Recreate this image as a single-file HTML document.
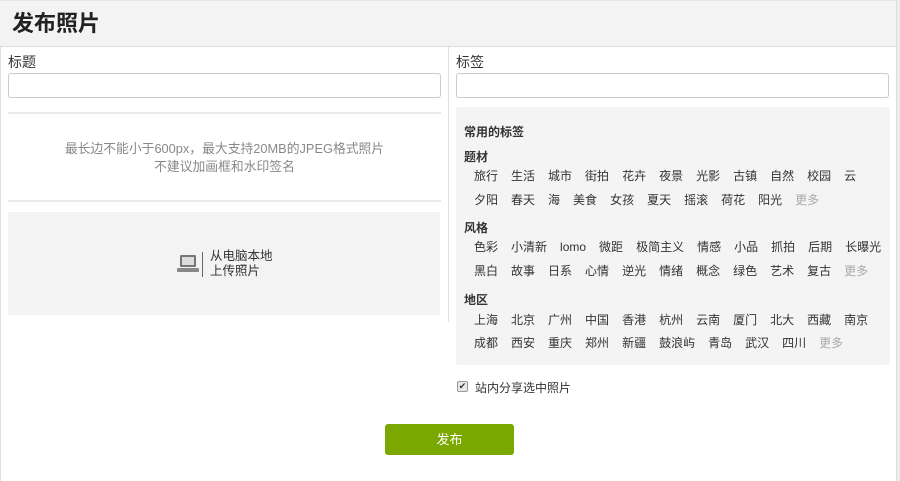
<!DOCTYPE html>
<html><head><meta charset="utf-8"><style>
*{margin:0;padding:0;box-sizing:border-box}
body{width:900px;height:481px;background:#fff;font-family:"Liberation Sans","Noto Sans CJK SC",sans-serif;color:#333;position:relative;overflow:hidden;font-size:12px}
.abs{position:absolute}
#hdr{left:0;top:0;width:897px;height:47px;background:#f3f3f3;border-bottom:1px solid #ddd;border-top:1px solid #e6e6e6}
#hdr h1{position:absolute;left:12px;top:9px;font-size:22px;font-weight:bold;color:#222;line-height:28px}
#rb{left:896px;top:0;width:4px;height:481px;background:#eee;border-left:1px solid #ddd}
#lb{left:0;top:47px;width:1px;height:434px;background:#e0e0e0}
.lbl{font-size:14px;color:#333;line-height:18px}
.inp{height:25px;border:1px solid #ccc;border-radius:3px;background:#fff}
.hr{height:2px;background:#ebebeb}
.tags{left:456px;top:107px;width:434px;height:258px;background:#f4f4f4;border-radius:3px}
.h{position:absolute;left:8px;font-weight:bold;font-size:12px;color:#333}
.row{position:absolute;left:18px;white-space:nowrap;font-size:12px;color:#333}
.row span{margin-right:13px}
.row .m{color:#aaa}
</style></head><body>
<div id="hdr" class="abs"><h1>发布照片</h1></div>
<div id="rb" class="abs"></div>
<div id="lb" class="abs"></div>
<div class="abs lbl" style="left:8px;top:53px">标题</div>
<div class="abs inp" style="left:8px;top:73px;width:433px"></div>
<div class="abs hr" style="left:8px;top:112px;width:433px"></div>
<div class="abs" style="left:8px;top:140px;width:433px;text-align:center;color:#888;font-size:12.8px;line-height:18px">最长边不能小于600px，最大支持20MB的JPEG格式照片<br>不建议加画框和水印签名</div>
<div class="abs hr" style="left:8px;top:200px;width:433px"></div>
<div class="abs" style="left:8px;top:212px;width:432px;height:103px;background:#f3f3f3"></div>
<svg class="abs" style="left:177px;top:254px" width="22" height="20" viewBox="0 0 22 20"><rect x="3" y="1" width="16" height="12" rx="1" fill="#777"/><rect x="5" y="3" width="12" height="8" fill="#ddd"/><rect x="0" y="14" width="22" height="4" rx="1" fill="#888"/></svg>
<div class="abs" style="left:202px;top:252px;width:1px;height:25px;background:#666"></div>
<div class="abs" style="left:210px;top:249px;font-size:12.5px;line-height:15px;color:#333">从电脑本地<br>上传照片</div>
<div class="abs" style="left:448px;top:47px;width:1px;height:275px;background:#e0e0e0"></div>
<div class="abs lbl" style="left:456px;top:53px">标签</div>
<div class="abs inp" style="left:456px;top:73px;width:433px"></div>
<div class="abs tags">
<div class="h" style="top:16px">常用的标签</div>
<div class="h" style="top:41px">题材</div>
<div class="row" style="top:60px"><span>旅行</span><span>生活</span><span>城市</span><span>街拍</span><span>花卉</span><span>夜景</span><span>光影</span><span>古镇</span><span>自然</span><span>校园</span><span>云</span></div>
<div class="row" style="top:84px"><span>夕阳</span><span>春天</span><span>海</span><span>美食</span><span>女孩</span><span>夏天</span><span>摇滚</span><span>荷花</span><span>阳光</span><span class="m">更多</span></div>
<div class="h" style="top:112px">风格</div>
<div class="row" style="top:131px"><span>色彩</span><span>小清新</span><span>lomo</span><span>微距</span><span>极简主义</span><span>情感</span><span>小品</span><span>抓拍</span><span>后期</span><span>长曝光</span></div>
<div class="row" style="top:155px"><span>黑白</span><span>故事</span><span>日系</span><span>心情</span><span>逆光</span><span>情绪</span><span>概念</span><span>绿色</span><span>艺术</span><span>复古</span><span class="m">更多</span></div>
<div class="h" style="top:184px">地区</div>
<div class="row" style="top:204px"><span>上海</span><span>北京</span><span>广州</span><span>中国</span><span>香港</span><span>杭州</span><span>云南</span><span>厦门</span><span>北大</span><span>西藏</span><span>南京</span></div>
<div class="row" style="top:227px"><span>成都</span><span>西安</span><span>重庆</span><span>郑州</span><span>新疆</span><span>鼓浪屿</span><span>青岛</span><span>武汉</span><span>四川</span><span class="m">更多</span></div>
</div>
<div class="abs" style="left:457px;top:381px;width:11px;height:11px;border:1px solid #999;border-radius:2px;background:#e8e8e8;font-size:9px;line-height:9px;text-align:center;color:#333">✔</div>
<div class="abs" style="left:475px;top:379px;font-size:12px;color:#333">站内分享选中照片</div>
<div class="abs" style="left:385px;top:424px;width:129px;height:31px;background:#7ba800;border-radius:3px;color:#fff;font-size:13px;text-align:center;line-height:31px">发布</div>
</body></html>
